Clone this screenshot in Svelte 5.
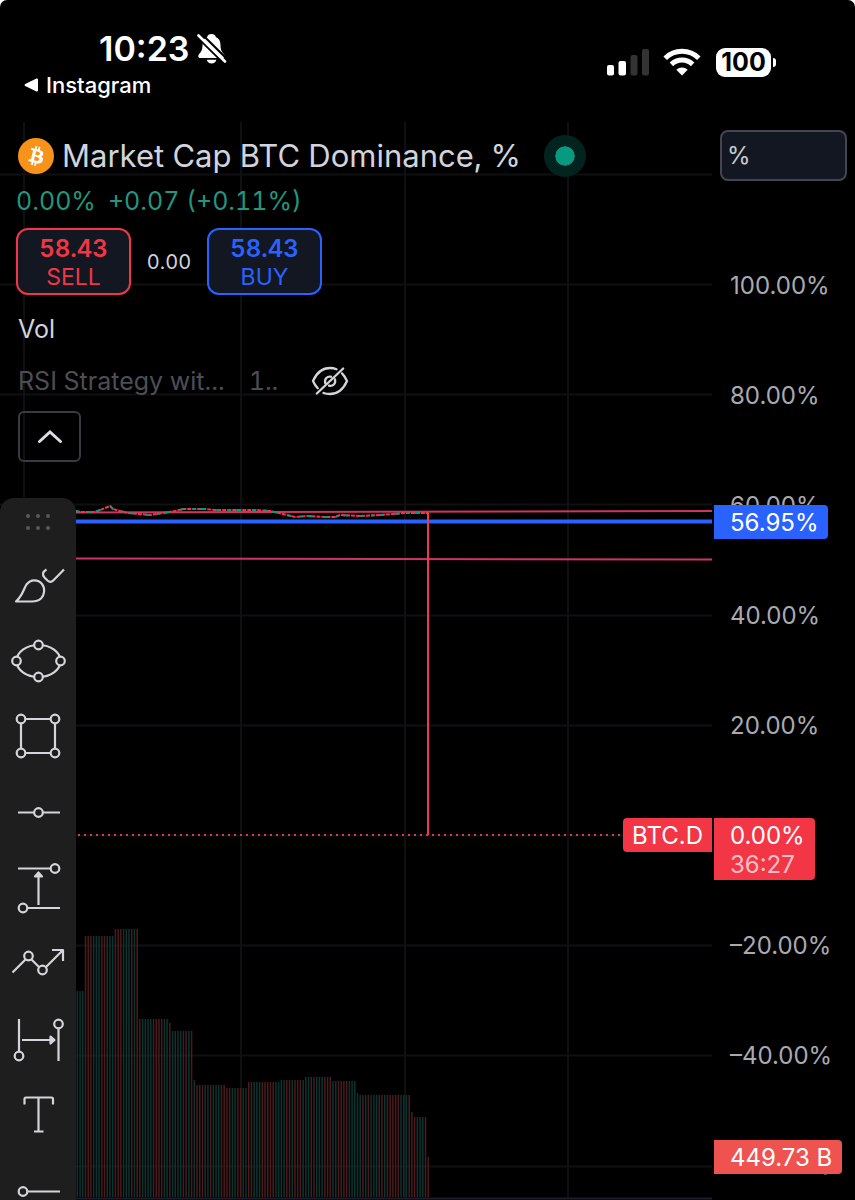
<script>
  const ticks = ['100.00%', '80.00%', '60.00%', '40.00%', '20.00%', '', '–20.00%', '–40.00%', '–60.00%'];
  const gridX = [24, 241, 405, 568];
  const gridY = [52, 162, 272, 382, 493, 603, 713, 823, 933, 1044];

  // Volume profile: [start x, end x, top y]
  const profile = [
    [76, 84, 869], [84, 114, 814], [114, 138, 807], [138, 168, 897], [168, 171, 901],
    [171, 193, 909], [193, 195, 958], [195, 224, 963], [224, 247, 966], [247, 278, 960],
    [278, 304, 958], [304, 332, 955], [332, 356, 959], [356, 358, 971], [358, 411, 973],
    [411, 413, 990], [413, 427, 995], [427, 430, 1035]
  ];
  const tones = 'gggrrrgggrrgggrrrgggrgrrggggrrrrggrggggrrgrgrrrggrgggrrrrggrrggrrgggrrrrrggggrrgrrrgggrrgggrrrggrrrrgggggrgrgggrrgrrrrr';
  const bars = [];
  for (let i = 0; i < 130; i++) {
    const x = 76.6 + i * 2.72;
    const step = profile.find((p) => x >= p[0] && x < p[1]);
    if (step) bars.push({ x, y: step[2], tone: tones[i % tones.length] });
  }

  // Price closes: [x, y]
  const closes = [
    [76, 389], [80, 390], [95, 390], [100, 388], [110, 384], [113, 387], [120, 389], [128, 391],
    [150, 393], [163, 391], [175, 389], [183, 387], [205, 387], [215, 388], [240, 388],
    [256, 388], [270, 389], [283, 392], [295, 395], [307, 394], [325, 395], [335, 395],
    [340, 393], [360, 394], [380, 393], [405, 391], [427, 391]
  ];
  const line = closes.map((p) => p.join(',')).join(' ');
</script>

<div class="app">
  <header class="status">
    <div class="left">
      <div class="clock">
        <time>10:23</time>
        <svg width="30" height="32" viewBox="0 0 30 32" aria-label="Silent mode">
          <path d="M14.500 1c-2.300 0-4 1.300-4.300 2.900C7 5.200 5.500 8 5.500 12c0 5-1.500 7-3.300 9-1.700 2-1 4 1.300 4h22c2.300 0 3-2 1.300-4-1.800-2-3.300-4-3.300-9 0-4-1.500-6.800-4.700-8.100C18.500 2.300 16.800 1 14.500 1zM9.800 26.800h9.600c-.5 2.300-2.400 3.700-4.800 3.700s-4.300-1.400-4.800-3.700z" fill="#fff" />
          <path d="M-.5 3.500 28 31.500M3.500-.3 31 27" stroke="#000" stroke-width="2" />
          <path d="M1.500 2.500 28 28.500" stroke="#fff" stroke-width="2.600" stroke-linecap="round" />
        </svg>
      </div>
      <a class="back" href="#instagram">
        <svg width="15" height="14" viewBox="0 0 15 14"><path d="M1.200 6.100 12.500.6c.8-.4 1.500 0 1.500.8v11.200c0 .8-.7 1.200-1.500.8L1.200 7.900c-.8-.4-.8-1.400 0-1.800z" fill="#fff" /></svg>
        Instagram
      </a>
    </div>
    <div class="right">
      <svg width="43" height="28" viewBox="0 0 43 28" aria-label="Signal">
        <rect x="1" y="17" width="7" height="10.500" rx="2" fill="#fff" />
        <rect x="12.500" y="13" width="7.500" height="14.500" rx="2" fill="#fff" />
        <rect x="24.500" y="7" width="7" height="20.500" rx="2" fill="#333" />
        <rect x="36" y="1" width="7" height="26.500" rx="2" fill="#333" />
      </svg>
      <svg class="wifi" width="38" height="28" viewBox="0 0 38 28" aria-label="Wi-Fi">
        <path d="M2.200 10.200a24 24 0 0 1 33.600 0M8.400 16.400a15.200 15.200 0 0 1 21.200 0" fill="none" stroke="#fff" stroke-width="5" />
        <path d="M19 27.500l-5.700-5.800a8.300 8.300 0 0 1 11.400 0z" fill="#fff" />
      </svg>
      <div class="battery">100</div>
    </div>
  </header>

  <main>
    <section class="plot">
      <svg class="canvas" viewBox="0 0 712 1078" preserveAspectRatio="none" aria-label="BTC dominance chart">
        {#each gridX as x}<path d="M{x} 0V1075" class="grid" />{/each}
        {#each gridY as y}<path d="M0 {y}.500H712" class="grid" />{/each}
        {#each bars as b}
          <rect x={b.x} y={b.y} width="1.500" height={1075 - b.y} class={b.tone === 'g' ? 'up' : 'down'} />
        {/each}
        <path d="M0 1076.500H712" stroke="#1d1c28" stroke-width="2" />
        <path d="M76 390.500 712 389" class="level" />
        <path d="M76 436.500 712 437.500" class="level" />
        <polyline points={line} class="close-red" />
        <polyline points={line} class="close-green" />
        <path d="M76 399.500H712" stroke="#2962ff" stroke-width="4" />
        <path d="M428 390V713" stroke="#f0384f" stroke-width="2" />
        <path d="M78 713H622" stroke="#d93a50" stroke-width="2" stroke-dasharray="2 4" />
      </svg>

      <div class="legend">
        <div class="title">
          <svg width="36" height="36" viewBox="0 0 32 32" aria-hidden="true">
            <circle cx="16" cy="16" r="16" fill="#f7931a" />
            <path transform="translate(1.600 1.600) scale(.9)" fill="#fff" d="M23.189 14.020c.314-2.096-1.283-3.223-3.465-3.975l.708-2.840-1.728-.430-.690 2.765c-.454-.114-.920-.220-1.385-.326l.695-2.783L15.596 6l-.708 2.839c-.376-.086-.746-.170-1.104-.260l.002-.009-2.384-.595-.460 1.846s1.283.294 1.256.312c.700.175.826.638.805 1.006l-.806 3.235c.048.012.110.030.180.057l-.183-.045-1.130 4.532c-.086.212-.303.531-.793.410.018.025-1.256-.313-1.256-.313l-.858 1.978 2.250.561c.418.105.828.215 1.231.318l-.715 2.872 1.727.430.708-2.840c.472.127.930.245 1.378.357l-.706 2.828 1.728.430.715-2.866c2.948.558 5.164.333 6.097-2.333.752-2.146-.037-3.385-1.588-4.192 1.130-.260 1.980-1.003 2.207-2.538zm-3.950 5.538c-.533 2.147-4.148.986-5.320.695l.950-3.805c1.172.293 4.929.872 4.370 3.110zm.535-5.569c-.487 1.953-3.495.960-4.470.717l.860-3.450c.975.243 4.118.696 3.610 2.733z" />
          </svg>
          <h1>Market Cap BTC Dominance, %</h1>
          <span class="live"></span>
        </div>
        <div class="change"><span>0.00%</span><span>+0.07 (+0.11%)</span></div>
        <div class="trade">
          <button class="sell"><b>58.43</b><span>SELL</span></button>
          <span class="spread">0.00</span>
          <button class="buy"><b>58.43</b><span>BUY</span></button>
        </div>
        <div class="vol">Vol</div>
        <div class="strategy">
          <span>RSI Strategy wit...</span><span class="arg">1..</span>
          <button class="eye" aria-label="Show indicator">
            <svg width="38" height="30" viewBox="0 0 38 30" fill="none" stroke="#d4d5da" stroke-width="2.300" stroke-linecap="round">
              <path d="M25.500 3.200C23.500 2.400 21.300 2 19 2 11 2 5.500 7 2 15c1.300 3 2.800 5.200 4.800 7.200M12.500 27c2 .7 4.200 1 6.500 1 8 0 13.500-5 17-13-1.300-3-3-5.600-5-7.600M14.200 17c-.9-4.400 2-7 5.800-6.300M18 19.700c4 .8 7-2 6-6.300M5.800 27.500 32.200 2.500" />
            </svg>
          </button>
        </div>
        <button class="collapse" aria-label="Collapse legend">
          <svg width="26" height="16" viewBox="0 0 26 16" fill="none" stroke="#dddee3" stroke-width="3" stroke-linecap="round"><path d="M2.500 12.500 13 3 23.500 12.500" /></svg>
        </button>
      </div>

      <nav class="tools" aria-label="Drawing tools">
        <div class="grip"><i></i><i></i><i></i><i></i><i></i><i></i></div>
        <button aria-label="Brush"><svg viewBox="0 0 76 76"><path d="M16 55.500C23 49 23.500 43 26.500 38.500c4-5.500 11.500-5.500 15.500-.5 3.500 4.500 2.500 11-1 14.500-2.500 2.200-5.500 3-9 3zM46.500 23.500c-4 2.500-4.500 5-2 8l3 3c2 1.900 4.500 1.600 6-.2L64 23.500" /></svg></button>
        <button aria-label="Ellipse"><svg viewBox="0 0 76 76"><ellipse cx="38.500" cy="39" rx="22" ry="16" /><g class="node"><circle cx="38.500" cy="23" r="4.300" /><circle cx="38.500" cy="55" r="4.300" /><circle cx="16.500" cy="39" r="4.300" /><circle cx="60.500" cy="39" r="4.300" /></g></svg></button>
        <button aria-label="Rectangle"><svg viewBox="0 0 76 76"><path d="M21 21H55V55H21z" /><g class="node"><circle cx="21" cy="21" r="4.300" /><circle cx="55" cy="21" r="4.300" /><circle cx="21" cy="55" r="4.300" /><circle cx="55" cy="55" r="4.300" /></g></svg></button>
        <button aria-label="Horizontal line"><svg viewBox="0 0 76 76"><path d="M18 38.500H60" /><g class="node"><circle cx="38.500" cy="38.500" r="4.300" /></g></svg></button>
        <button aria-label="Price range"><svg viewBox="0 0 76 76"><path d="M18 18.500H55M23 58H60M38.500 55V25" /><path class="tip" d="M35 26.500 38.500 22.500 42 26.500z" /><g class="node"><circle cx="55" cy="18.500" r="4.300" /><circle cx="23" cy="58" r="4.300" /></g></svg></button>
        <button aria-label="Path"><svg viewBox="0 0 76 76"><path d="M12.500 46.500 28.500 30.500 42.500 44.500 63 24M52 24H63V35" /><g class="node"><circle cx="28.500" cy="30" r="4.300" /><circle cx="42.500" cy="44" r="4.300" /></g></svg></button>
        <button aria-label="Date range"><svg viewBox="0 0 76 76"><path d="M19 17V53M58.500 23V59M22 38H52" /><path class="tip" d="M50.500 34.500 54.500 38 50.500 41.500z" /><g class="node"><circle cx="19" cy="54" r="4.300" /><circle cx="58.500" cy="22" r="4.300" /></g></svg></button>
        <button aria-label="Text"><svg viewBox="0 0 76 76"><path d="M24.500 26.500V21q0-1.500 1.500-1.500H51.500q1.500 0 1.500 1.500V26.500M38.500 19.500V53.500M34 53.500H43.500" /></svg></button>
        <button aria-label="Ray"><svg viewBox="0 0 76 76"><path d="M23 37.500H60" /><g class="node"><circle cx="23" cy="37.500" r="4.300" /></g></svg></button>
      </nav>
      <span class="tag symbol">BTC.D</span>
    </section>

    <aside class="scale">
      <select aria-label="Scale unit"><option>%</option></select>
      <div class="ticks">
        {#each ticks as t}<span>{t}</span>{/each}
      </div>
      <span class="tag blue">56.95%</span>
      <span class="tag last">0.00%<small>36:27</small></span>
      <span class="tag volume">449.73 B</span>
    </aside>
  </main>
</div>

<style>
  :global(body) { background: #fff; }
  .app {
    height: 100vh;
    display: flex;
    flex-direction: column;
    overflow: hidden;
    background: #000;
    border-radius: 7px 7px 0 0;
    color: #d1d4dc;
    font: 24px/30px Inter, "Liberation Sans", sans-serif;
  }
  button, select { font: inherit; color: inherit; margin: 0; padding: 0; background: none; border: 0; }
  svg { display: block; flex: none; }
  h1 { margin: 0; font: inherit; }

  .status { flex: none; height: 122px; display: flex; justify-content: space-between; color: #fff; }
  .left { padding: 29px 0 0 24px; }
  .clock { display: flex; align-items: center; gap: 8px; margin-left: 75px; font-size: 34px; font-weight: 600; line-height: 40px; }
  .back { display: flex; align-items: center; gap: 7px; margin-top: 1px; font-size: 22px; font-weight: 500; color: #fff; text-decoration: none; }
  .right { display: flex; align-items: center; height: 124px; padding-right: 84px; gap: 14px; }
  .battery { position: relative; width: 55px; margin-left: 1px; border-radius: 9px; background: #fff; color: #000; font-size: 25px; font-weight: 700; line-height: 29px; text-align: center; }
  .battery::after { content: ""; position: absolute; left: 57px; top: 10px; width: 3px; height: 9px; border-radius: 0 4px 4px 0; background: #fff; }

  main { flex: 1; min-height: 0; display: grid; grid-template-columns: minmax(0, 1fr) 143px; grid-template-rows: minmax(0, 1fr); }
  .plot { position: relative; display: flex; flex-direction: column; }
  .canvas { position: absolute; top: 0; left: 0; width: 100%; height: 1078px; }
  .grid { stroke: #0f1012; stroke-width: 2; }
  .up { fill: #0c3531; }
  .down { fill: #4b1b1e; }
  .level { stroke: #cf3561; stroke-width: 2; }
  .close-red, .close-green { fill: none; stroke: #f23645; stroke-width: 2; stroke-dasharray: 4 1; }
  .close-green { stroke: #089981; stroke-dasharray: 4 8 3 5 5 11; }

  .legend { position: relative; flex: none; padding: 12px 0 0 16px; display: flex; flex-direction: column; align-items: flex-start; white-space: nowrap; font-variant-numeric: tabular-nums; }
  .title { display: flex; align-items: center; height: 44px; gap: 8px; padding-left: 2px; font-size: 31px; }
  .live { width: 20px; height: 20px; margin-left: 15px; border: 11px solid #03241e; border-radius: 50%; background: #089981; background-clip: padding-box; }
  .change { display: flex; gap: 12px; margin-top: 8px; color: #22967e; font-size: 25px; }
  .trade { display: flex; align-items: center; margin-top: 12px; }
  .sell, .buy { width: 115px; height: 67px; display: flex; flex-direction: column; align-items: center; justify-content: center; padding-top: 2px; border: 2px solid; border-radius: 12px; background: #131722; line-height: 28px; font-size: 23px; font-variant-numeric: tabular-nums; }
  .sell b, .buy b { font-size: 24px; font-weight: 600; }
  .sell { color: #f23645; }
  .buy { color: #2962ff; }
  .spread { width: 76px; text-align: center; font-size: 20px; }
  .vol { margin: 19px 0 0 2px; font-size: 25px; }
  .strategy { display: flex; align-items: center; height: 30px; margin: 22px 0 0 2px; font-size: 25px; color: #4d4e55; }
  .arg { margin-left: 24px; }
  .eye { margin-left: 33px; }
  .collapse { display: flex; align-items: center; justify-content: center; width: 63px; height: 51px; margin: 15px 0 0 2px; border: 2px solid #3a3b42; border-radius: 6px; }

  .tools { position: relative; flex: 1; min-height: 0; width: 76px; margin-top: 36px; overflow: hidden; border-radius: 14px 14px 0 0; background: #1e1e1e; }
  .grip { display: grid; grid-template-columns: repeat(3, 4px); gap: 8px 6px; justify-content: center; align-content: center; height: 48px; }
  .grip i { width: 4px; height: 4px; border-radius: 50%; background: #58595e; }
  .tools button { display: block; width: 76px; height: 76px; }
  .tools svg { fill: none; stroke: #d4d5da; stroke-width: 2.2; stroke-linejoin: round; }
  .tools .node { fill: #1e1e1e; }
  .tools .tip { fill: #d4d5da; }

  .scale { position: relative; color: #a9aab0; overflow: hidden; }
  .scale select { appearance: none; display: block; width: 127px; height: 51px; margin: 8px 8px 50px; padding-left: 5px; border: 2px solid #434651; border-radius: 8px; background: #131722; color: #c9cbd1; }
  .ticks { display: grid; grid-auto-rows: 110px; align-items: center; padding-left: 18px; }
  .tag { position: absolute; left: 2px; padding: 3px 10px 1px 16px; border-radius: 0 4px 4px 0; color: #fff; white-space: nowrap; }
  .blue { top: 383px; background: #2962ff; }
  .last { top: 696px; background: #f23645; }
  .last small { display: block; font-size: 24px; line-height: 28px; color: #fbc0c5; }
  .volume { top: 1018px; background: #ef5350; }
  .symbol { top: 696px; left: auto; right: 0; padding: 3px 9px 1px; border-radius: 4px 0 0 4px; background: #f23645; }
</style>
